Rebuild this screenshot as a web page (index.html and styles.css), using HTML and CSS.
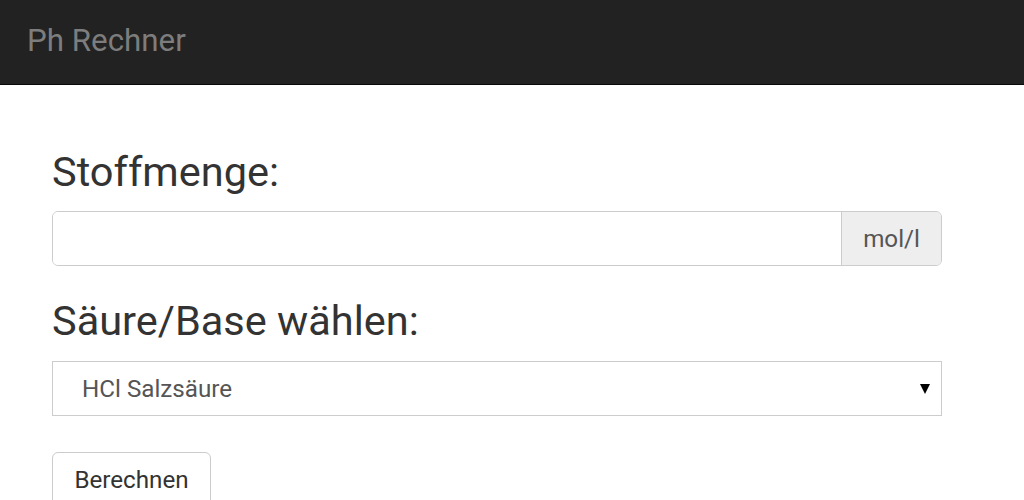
FILE: index.html
```html
<!DOCTYPE html>
<html lang="de">
<head>
<meta charset="utf-8">
<title>Ph Rechner</title>
<link rel="stylesheet" href="styles.css">
</head>
<body>
<nav class="navbar">
  <span class="brand">Ph Rechner</span>
</nav>
<main class="content">
  <label class="field-label">Stoffmenge:</label>
  <div class="input-group">
    <div class="input-field"></div>
    <div class="addon">mol/l</div>
  </div>
  <label class="field-label second">Säure/Base wählen:</label>
  <div class="select">
    <span class="select-text">HCl Salzsäure</span>
    <span class="select-arrow"></span>
  </div>
  <div class="actions">
    <button class="btn">Berechnen</button>
  </div>
</main>
</body>
</html>
```
FILE: styles.css
```css
* { box-sizing: border-box; }
html, body { margin: 0; padding: 0; background: #fff; }
body {
  font-family: Roboto, "Liberation Sans", sans-serif;
  color: #333;
  overflow: hidden;
  height: 500px;
}
.navbar {
  height: 85px;
  background: #222;
  border-bottom: 1px solid #080808;
  display: flex;
  align-items: center;
  padding-left: 27px;
}
.brand {
  font-size: 31.3px;
  color: #7d7d7d;
  line-height: 1;
  padding-bottom: 2px;
}
.content {
  padding: 0 82px 0 52px;
  display: flex;
  flex-direction: column;
}
.field-label {
  display: block;
  font-size: 41.5px;
  line-height: 45px;
  margin-top: 64px;
  margin-bottom: 17px;
  color: #333;
}
.field-label.second {
  margin-top: 32px;
  margin-bottom: 18px;
}
.input-group {
  display: flex;
  height: 55px;
  border: 1px solid #ccc;
  border-radius: 6px;
  overflow: hidden;
  box-shadow: inset 0 1px 1px rgba(0,0,0,.075);
}
.input-field { flex: 1; background: #fff; }
.addon {
  width: 100px;
  background: #eee;
  border-left: 1px solid #ccc;
  display: flex;
  align-items: center;
  justify-content: center;
  font-size: 24.2px;
  color: #555;
}
.select {
  height: 55px;
  border: 1px solid #ccc;
  display: flex;
  align-items: center;
  justify-content: space-between;
  padding: 0 11px 0 29px;
  background: #fff;
}
.select-text {
  font-size: 24.2px;
  color: #555;
}
.select-arrow {
  width: 0;
  height: 0;
  border-left: 5px solid transparent;
  border-right: 5px solid transparent;
  border-top: 10px solid #000;
  margin-top: 1px;
}
.actions {
  margin-top: 36px;
  display: flex;
}
.btn {
  font-family: Roboto, "Liberation Sans", sans-serif;
  font-size: 24.2px;
  color: #333;
  background: #fff;
  border: 1px solid #ccc;
  border-radius: 6px;
  height: 55px;
  padding: 0 20px;
  width: 159px;
}
```
